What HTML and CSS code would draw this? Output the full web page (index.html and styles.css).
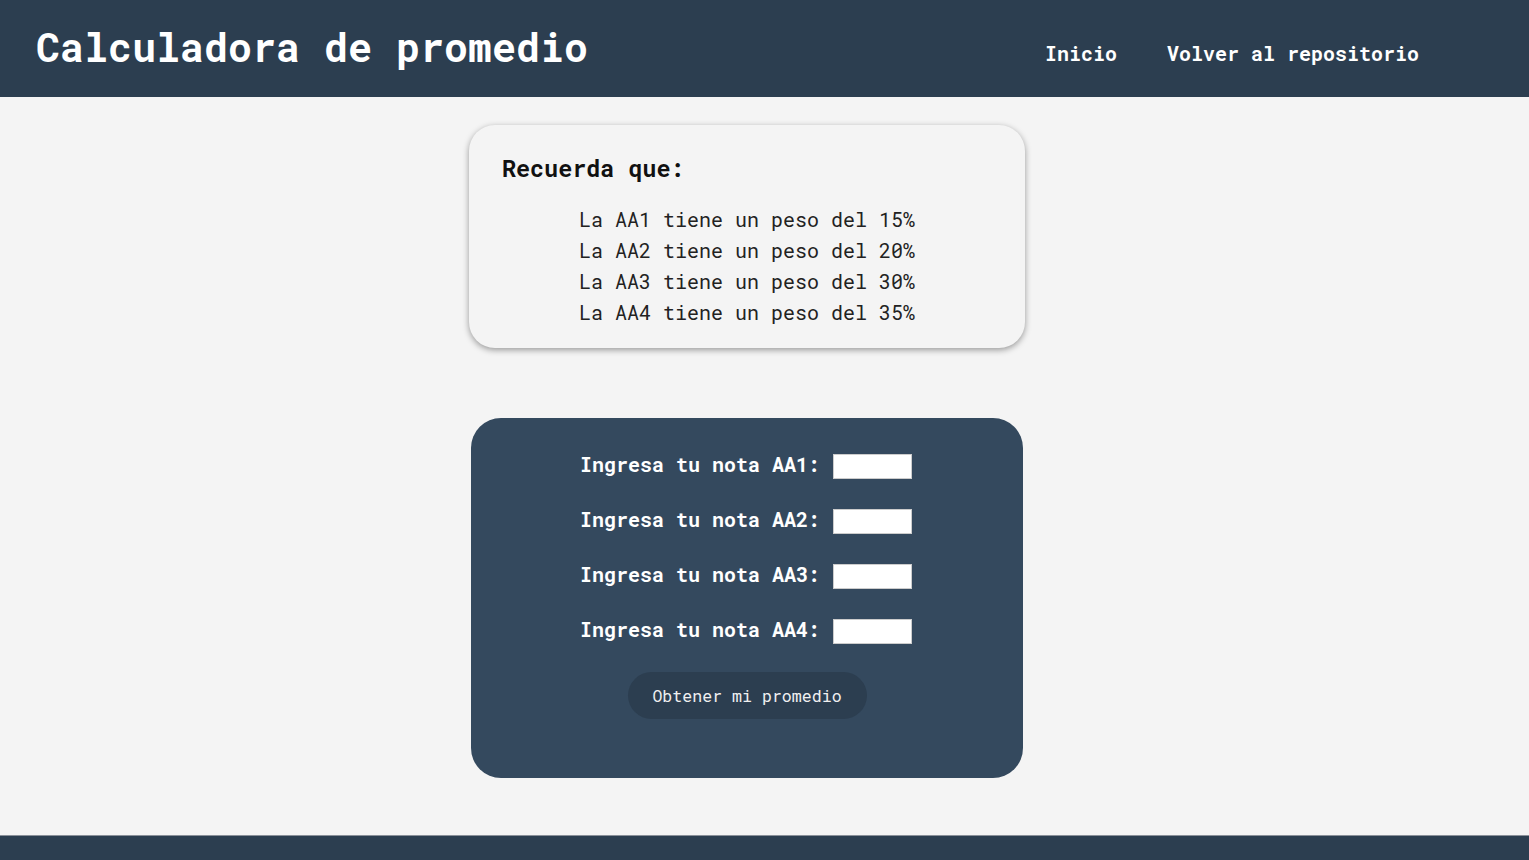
FILE: index.html
```html
<!DOCTYPE html>
<html lang="es">
<head>
<meta charset="utf-8">
<title>Calculadora de promedio</title>
<link rel="stylesheet" href="styles.css">
</head>
<body>
<header class="topbar">
  <h1 class="brand">Calculadora de promedio</h1>
  <nav class="nav">
    <a href="#" class="nav-link">Inicio</a>
    <a href="#" class="nav-link">Volver al repositorio</a>
  </nav>
</header>
<main class="main">
  <section class="info-card">
    <h3 class="info-title">Recuerda que:</h3>
    <ul class="info-list">
      <li>La AA1 tiene un peso del 15%</li>
      <li>La AA2 tiene un peso del 20%</li>
      <li>La AA3 tiene un peso del 30%</li>
      <li>La AA4 tiene un peso del 35%</li>
    </ul>
  </section>
  <form class="form-card">
    <label class="row"><span class="row-label">Ingresa tu nota AA1:</span><input class="row-input" type="text"></label>
    <label class="row"><span class="row-label">Ingresa tu nota AA2:</span><input class="row-input" type="text"></label>
    <label class="row"><span class="row-label">Ingresa tu nota AA3:</span><input class="row-input" type="text"></label>
    <label class="row"><span class="row-label">Ingresa tu nota AA4:</span><input class="row-input" type="text"></label>
    <button type="button" class="btn">Obtener mi promedio</button>
  </form>
</main>
<footer class="footer"></footer>
</body>
</html>
```
FILE: styles.css
```css
* { box-sizing: border-box; }
html, body { margin: 0; padding: 0; }
body {
  background: #f4f4f4;
  font-family: "Roboto Mono", "DejaVu Sans Mono", "Liberation Mono", monospace;
  color: #222;
  height: 860px;
  overflow: hidden;
}
.topbar {
  height: 97px;
  background: #2c3e50;
  display: flex;
  align-items: center;
  justify-content: space-between;
  padding: 0 110px 0 36px;
}
.brand {
  margin: 0;
  color: #fff;
  font-size: 40px;
  font-weight: 700;
  line-height: 1;
  padding-bottom: 4px;
}
.nav {
  display: flex;
  gap: 50px;
  padding-top: 9px;
}
.nav-link {
  color: #fff;
  text-decoration: none;
  font-size: 20px;
  font-weight: 700;
}
.main {
  display: flex;
  flex-direction: column;
  align-items: center;
  padding: 28px 35px 0 0;
  height: 738px;
}
.info-card {
  width: 556px;
  height: 223px;
  background: #f4f4f4;
  border-radius: 26px;
  box-shadow: 0 2px 6px rgba(0,0,0,0.38);
  padding: 29px 33px 0;
}
.info-title {
  margin: 0;
  font-size: 23.4px;
  line-height: 28px;
  font-weight: 700;
  color: #111;
}
.info-list {
  list-style: none;
  margin: 22px 0 0;
  padding: 0;
  text-align: center;
  font-size: 20px;
  line-height: 31px;
  color: #222;
}
.form-card {
  margin-top: 70px;
  width: 552px;
  height: 360px;
  background: #34495e;
  border-radius: 30px;
  display: flex;
  flex-direction: column;
  align-items: center;
  padding-top: 36px;
  gap: 30px;
}
.row {
  display: flex;
  align-items: center;
  gap: 13px;
  height: 25px;
}
.row-label {
  color: #fff;
  font-size: 20px;
  font-weight: 700;
  margin: -5px 0 0 -2px;
}
.row-input {
  width: 79px;
  height: 25px;
  border: 1px solid #ccc;
  background: #fff;
  padding: 0;
  margin: 0;
}
.btn {
  margin-top: -2px;
  width: 239px;
  height: 47px;
  border: none;
  border-radius: 24px;
  background: #2c3e50;
  color: #f0f0f0;
  font-family: inherit;
  font-size: 16.6px;
  cursor: pointer;
}
.footer {
  height: 25px;
  background: #2c3e50;
  border-top: 1px solid #8a9099;
}
```
